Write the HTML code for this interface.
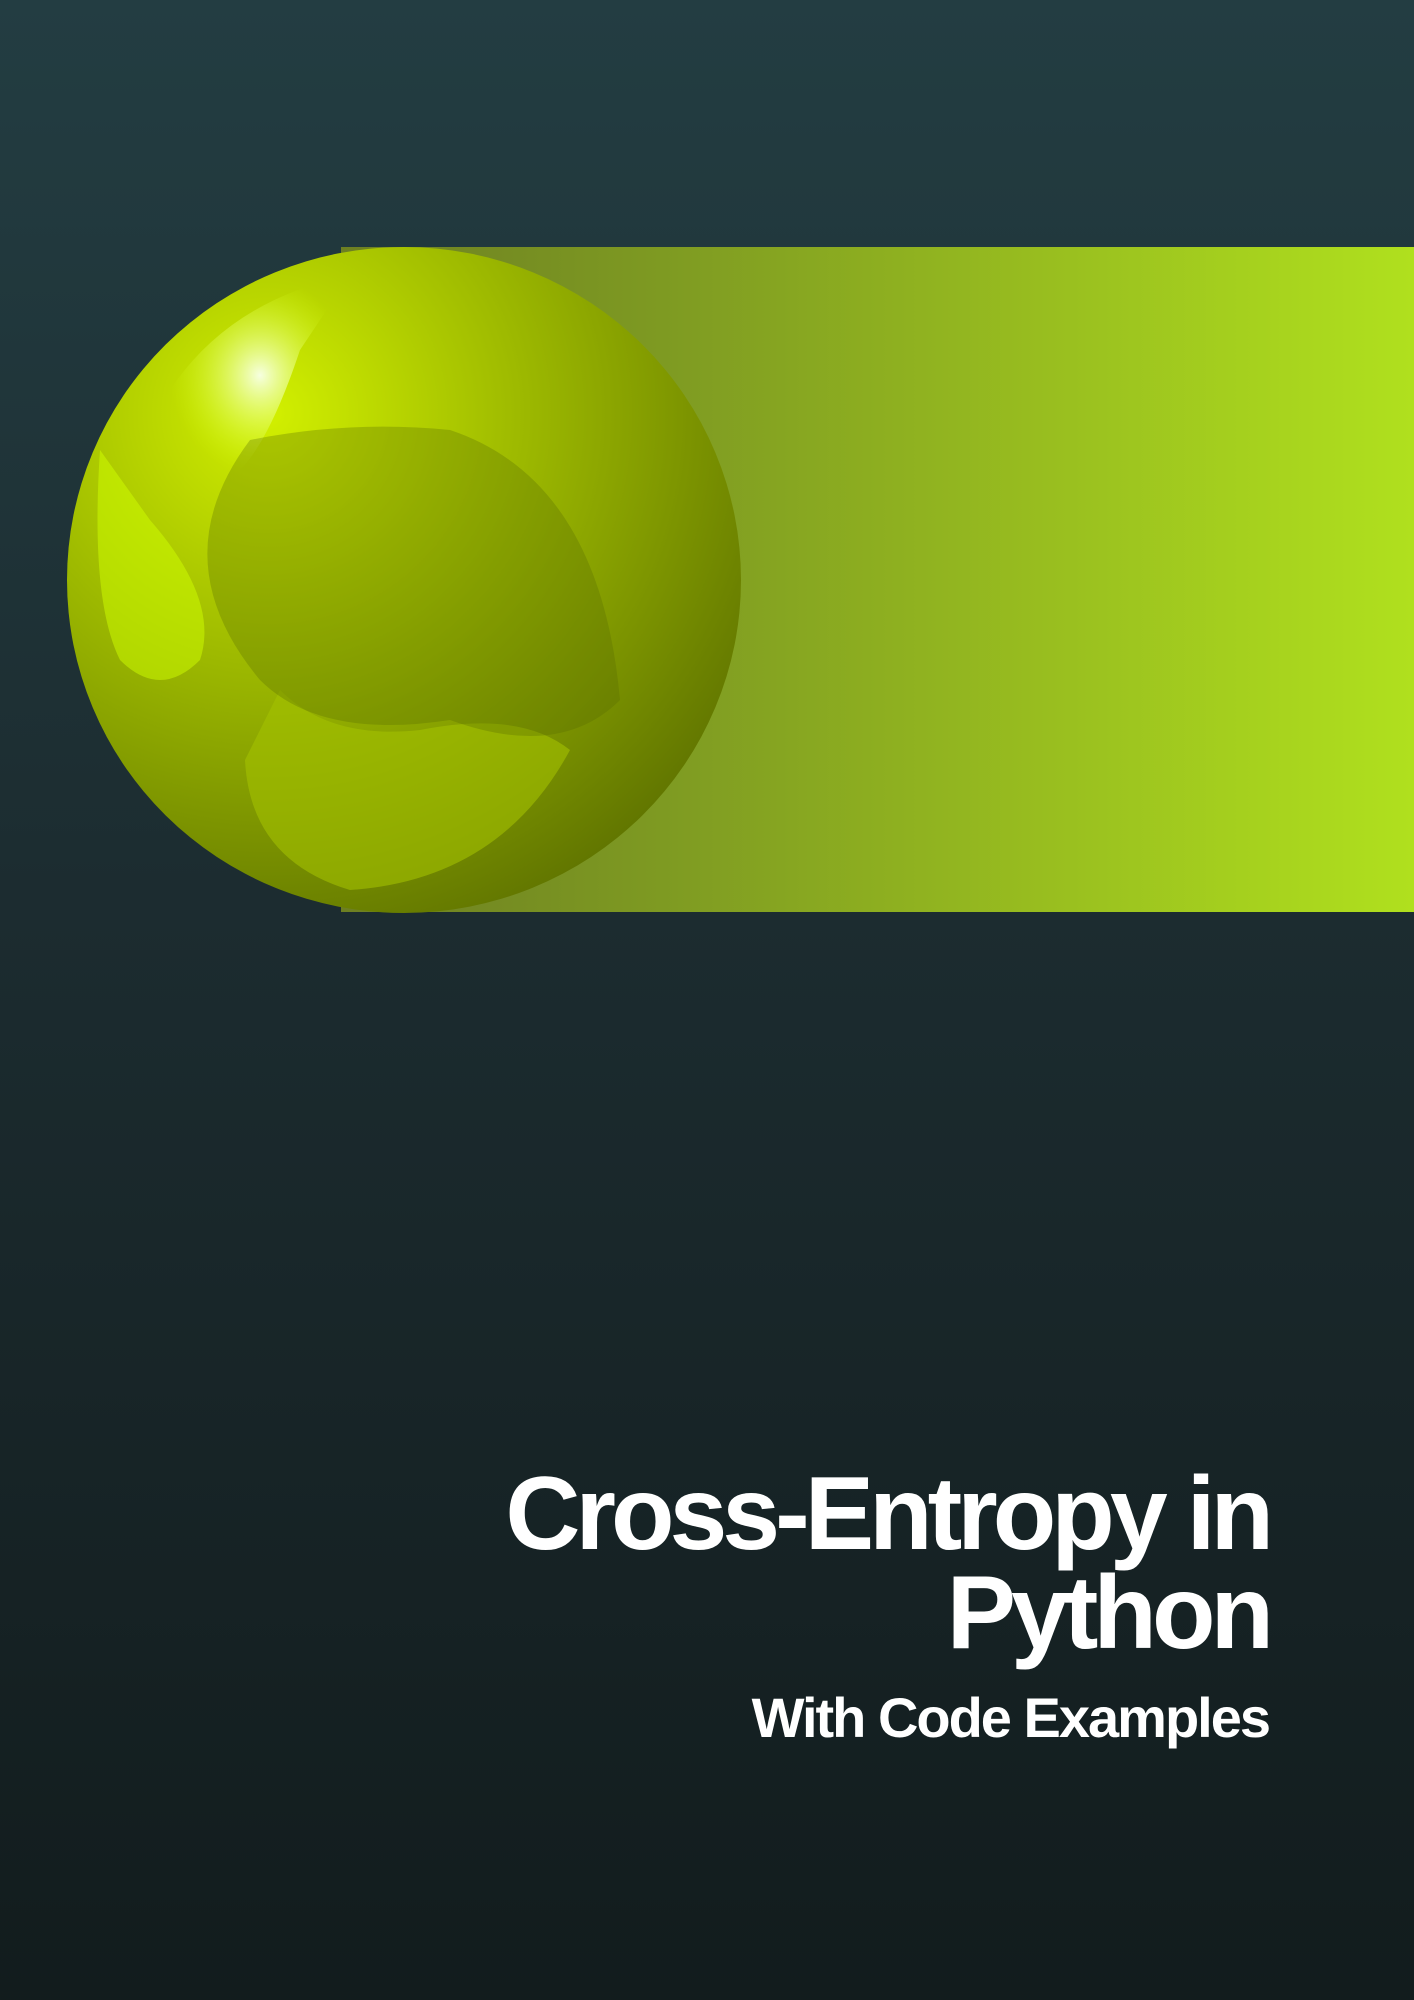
<!DOCTYPE html>
<html><head><style>
html,body{margin:0;padding:0}
body{width:1414px;height:2000px;position:relative;overflow:hidden;background:linear-gradient(180deg,#233d42 0%,#1c2c30 45%,#121c1d 100%);font-family:"Liberation Sans",sans-serif}
.band{position:absolute;left:341px;top:247px;width:1073px;height:665px;background:linear-gradient(90deg,#6d7f22 0%,#7e9a22 30%,#98bd1f 65%,#b0e01e 100%)}
svg{position:absolute;left:0;top:0}
.t{position:absolute;right:145px;color:#fff;font-weight:bold;text-align:right;white-space:nowrap}
</style></head><body>
<div class="band"></div>
<svg width="1414" height="1000">
<defs>
<radialGradient id="g" cx="0.3" cy="0.25" r="0.85">
<stop offset="0" stop-color="#d2f000"/>
<stop offset="0.45" stop-color="#9cb800"/>
<stop offset="1" stop-color="#5e7200"/>
</radialGradient>
<radialGradient id="h" cx="0.5" cy="0.5" r="0.5">
<stop offset="0" stop-color="#f6ffe0"/>
<stop offset="1" stop-color="#d4ff00" stop-opacity="0"/>
</radialGradient>
</defs>
<ellipse cx="404" cy="580" rx="337" ry="333" fill="url(#g)"/>
<path d="M170 390 Q230 300 350 275 L300 350 Q270 440 240 470 Q190 490 170 440Z" fill="url(#h)"/>
<path d="M100 450 Q90 600 120 660 Q160 700 200 660 Q220 600 150 520 Z" fill="#cfff00" opacity="0.5"/>
<path d="M280 690 Q330 740 420 730 Q520 710 570 750 Q500 880 350 890 Q250 860 245 760Z" fill="#a4c200" opacity="0.6"/>
<path d="M250 440 Q350 420 450 430 Q600 480 620 700 Q560 760 450 720 Q320 740 260 680 Q160 560 250 440Z" fill="#566b00" opacity="0.3"/>
</svg>
<div class="t" style="top:1462px;font-size:104px;letter-spacing:-5px;line-height:1">Cross-Entropy in</div>
<div class="t" style="top:1561px;font-size:104px;letter-spacing:-5px;line-height:1">Python</div>
<div class="t" style="top:1690px;font-size:56px;letter-spacing:-2px;line-height:1">With Code Examples</div>
</body></html>
